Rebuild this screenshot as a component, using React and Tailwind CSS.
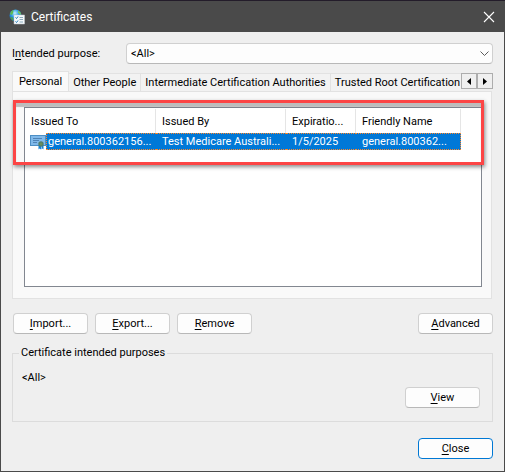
import React from "react";

const tabs = ["Personal", "Other People", "Intermediate Certification Authorities", "Trusted Root Certification"];

function DialogButton({ first, rest, primary }) {
  return (
    <button
      type="button"
      className={
        "flex h-[21px] w-[75px] shrink-0 items-center justify-center rounded border bg-[#fdfdfd] text-black " +
        (primary ? "border-[#0078d4]" : "border-[#d0d0d0] border-b-[#b8b8b8]")
      }
    >
      <span>
        <u className="underline-offset-2">{first}</u>
        {rest}
      </span>
    </button>
  );
}

function GlobeIcon() {
  return (
    <svg width="16" height="16" viewBox="0 0 16 16" aria-hidden="true">
      <defs>
        <radialGradient id="globe" cx="0.45" cy="0.3" r="0.7">
          <stop offset="0" stopColor="#c4f0ff" />
          <stop offset="0.45" stopColor="#35a3e4" />
          <stop offset="1" stopColor="#0d49a5" />
        </radialGradient>
      </defs>
      <circle cx="6.5" cy="6.5" r="6" fill="url(#globe)" />
      <path d="M.8 5 2.500 2 4.500 1 4 4 3 6Z" fill="#5cbb52" />
      <path d="M1 8.500 3 8l1.500 2-.5 2.300Z" fill="#4ca64a" />
      <path d="M9 1.500 11.500 3.500l.8 2.500L10.500 5 9 3.500Z" fill="#73c95a" />
      <path d="M5 6h10.500v9H5Z" fill="#f4f8fa" stroke="#c0cbd3" strokeWidth="0.5" />
      <path d="m6.500 8.500 1 1 1.500-2M6.500 12.500l1 1 1.500-2" fill="none" stroke="#1976b8" />
      <path d="M10.500 8.500H14M10.500 10.500H14M10.500 13H14" stroke="#8aaabd" />
    </svg>
  );
}

function CertificateIcon() {
  return (
    <svg width="16" height="16" viewBox="0 0 16 16" className="shrink-0" aria-hidden="true">
      <rect x="0.5" y="1.5" width="15" height="10" fill="#80b9ea" stroke="#4d8fc5" />
      <path d="M3 4.500h9M3 6.500h6M3 8.500h4" stroke="#4f83b6" />
      <path d="M8.500 11v4.500l1-1 1.500 1V11Z" fill="#1582d7" />
      <path d="M11.500 11v4.500l1-1 1 1V11Z" fill="#1582d7" />
      <circle cx="11" cy="10" r="2.700" fill="#527f6c" />
      <circle cx="11" cy="10" r="1.200" fill="#6a9159" />
    </svg>
  );
}

export default function App() {
  return (
    <main className="border-t border-[#231c2a] bg-[#efefef] font-[Roboto,'Noto_Sans',sans-serif] text-[11px] leading-4 text-black">
      <header className="flex h-[31px] items-center bg-[#4a4a4a] pr-[10px] pl-[9px] text-white">
        <GlobeIcon />
        <h1 className="ml-[6px] flex-1 text-[12px]">Certificates</h1>
        <button type="button" aria-label="Close window" className="flex size-3 items-center justify-center">
          <svg width="12" height="12" viewBox="0 0 12 12" stroke="#fff" strokeWidth="1.1">
            <path d="m1 1 10 10M11 1 1 11" />
          </svg>
        </button>
      </header>

      <div className="border-x border-b border-[#4a4a4a] px-[11px] pt-[11px] pb-3">
        <div className="flex items-center">
          <label htmlFor="purpose" className="w-[114px] shrink-0">
            I<u className="underline-offset-2">n</u>tended purpose:
          </label>
          <div className="relative flex-1">
            <select
              id="purpose"
              className="block h-[21px] w-full appearance-none rounded-sm border border-[#d0d0d0] border-b-[#b8b8b8] bg-[#fdfdfd] px-1 leading-4"
            >
              <option>&lt;All&gt;</option>
            </select>
            <svg className="pointer-events-none absolute top-[8px] right-[4px]" width="9" height="6" viewBox="0 0 9 6" fill="none" stroke="#5c5c5c" aria-hidden="true">
              <path d="m.5.500 4 4 4-4" />
            </svg>
          </div>
        </div>

        <div className="mt-[7px] flex h-5 items-end">
          <div role="tablist" className="flex min-w-0 flex-1 items-end overflow-hidden">
            {tabs.map((tab, i) => (
              <button
                key={tab}
                type="button"
                role="tab"
                aria-selected={i === 0}
                className={
                  "shrink-0 border-t border-[#e2e2e2] text-left whitespace-nowrap " +
                  (i === 0
                    ? "h-5 border-x bg-[#f9f9f9] px-[6px]"
                    : i === 3
                      ? "h-[18px] flex-1 bg-[#f2f2f2] pl-1"
                      : "h-[18px] border-r bg-[#f2f2f2] px-1")
                }
              >
                {tab}
              </button>
            ))}
          </div>
          <div className="mb-[2px] flex">
            <button type="button" aria-label="Scroll tabs left" className="flex h-4 w-4 items-center justify-center border border-[#adadad] bg-[#efefef]">
              <svg width="4" height="7" viewBox="0 0 4 7"><path d="M4 0v7L0 3.500Z" /></svg>
            </button>
            <button type="button" aria-label="Scroll tabs right" className="flex h-4 w-4 items-center justify-center border border-[#adadad] bg-[#efefef]">
              <svg width="4" height="7" viewBox="0 0 4 7"><path d="M0 0v7l4-3.500Z" /></svg>
            </button>
          </div>
        </div>

        <section className="relative mr-px border border-[#e2e2e2] bg-[#f9f9f9] px-[11px] pt-[15px] pb-[11px]">
          <div className="-mr-[2px] h-[180px] border border-[#828790] bg-white pt-px">
            <table className="w-[436px] table-fixed border-separate border-spacing-0 text-left">
              <colgroup>
                <col className="w-[131px]" />
                <col className="w-[130px]" />
                <col className="w-[70px]" />
                <col className="w-[105px]" />
              </colgroup>
              <thead>
                <tr className="h-6">
                  {["Issued To", "Issued By", "Expiratio...", "Friendly Name"].map((name) => (
                    <th key={name} scope="col" className="border-r border-[#e5e5e5] p-0 pt-[2px] pl-[6px] font-normal whitespace-nowrap">
                      {name}
                    </th>
                  ))}
                </tr>
              </thead>
              <tbody>
                <tr className="h-[17px] whitespace-nowrap text-white">
                  <td className="p-0 pl-[5px]">
                    <div className="flex items-center">
                      <CertificateIcon />
                      <span className="h-[17px] flex-1 border-y border-l border-dotted border-[#ff8728] bg-[#0078d7] pl-px leading-4">general.800362156...</span>
                    </div>
                  </td>
                  <td className="border-y border-dotted border-[#ff8728] bg-[#0078d7] p-0 pl-[6px] leading-[15px]">Test Medicare Australi...</td>
                  <td className="border-y border-dotted border-[#ff8728] bg-[#0078d7] p-0 pl-[6px] leading-[15px]">1/5/2025</td>
                  <td className="border-y border-r border-dotted border-[#ff8728] bg-[#0078d7] p-0 pl-[6px] leading-[15px]">general.800362...</td>
                </tr>
              </tbody>
            </table>
          </div>
          <div className="pointer-events-none absolute top-[8px] right-[7px] left-0 h-[65px] border-[3px] border-[#fc4545] shadow-[1px_2px_4px_rgba(0,0,0,0.45),inset_0px_4px_1px_rgba(0,0,0,0.24)]" />
        </section>

        <div className="mt-[14px] flex gap-[7px] pl-px">
          <DialogButton first="I" rest="mport..." />
          <DialogButton first="E" rest="xport..." />
          <DialogButton first="R" rest="emove" />
          <div className="flex-1" />
          <DialogButton first="A" rest="dvanced" />
        </div>

        <fieldset className="mt-[11px] h-[77px] border border-[#dcdcdc] pr-3 pl-[9px]">
          <legend className="-ml-[3px] px-[2px]">Certificate intended purposes</legend>
          <p className="mt-[9px]">&lt;All&gt;</p>
          <div className="mt-px flex justify-end">
            <DialogButton first="V" rest="iew" />
          </div>
        </fieldset>

        <div className="mt-4 flex justify-end">
          <DialogButton first="C" rest="lose" primary />
        </div>
      </div>
    </main>
  );
}
